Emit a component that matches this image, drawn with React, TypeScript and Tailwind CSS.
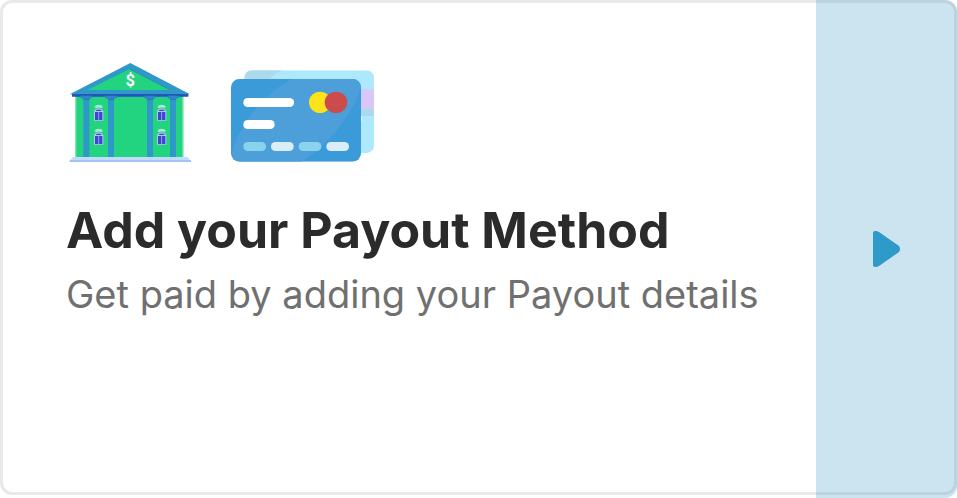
function BankWindow({ x, y }: { x: number; y: number }) {
  return (
    <g transform={`translate(${x} ${y})`}>
      <path d="M1 6 L6 1 L14 -1 L22 1 L27 6 L22 9 H6 Z" fill="#a6ecd0" />
      <path d="M10 6 H18 V11 H10 Z" fill="#63ddb0" />
      <path d="M0 19 L4 13 L8 11 H20 L24 13 L28 19 V47 H0 Z" fill="#b3c4f5" />
      <path d="M8 14 H20 L23 18 H5 Z" fill="#3c46d2" />
      <path d="M3 21 H25 V45 H3 Z" fill="#3c46d2" />
      <path d="M14 21 V45" stroke="#8fa2ee" strokeWidth="3" />
    </g>
  );
}

function BankPillar({ x }: { x: number }) {
  return (
    <g transform={`translate(${x} 0)`}>
      <path d="M-8 122 H26 V128 L21 131 H-3 L-8 128 Z" fill="#2c86c6" />
      <path d="M0 130 H18 V306 H0 Z" fill="#2e98c8" />
      <path d="M0 131 H18 V135 H0 Z" fill="#3070cc" />
    </g>
  );
}

function BankIcon() {
  return (
    <svg viewBox="27 21 372 303" className="h-[101px] w-[124px]" role="img" aria-label="Bank">
      <path d="M46 120 H370 V308 H46 Z" fill="#22d37f" />
      <path d="M46 126 H49 V306 H46 Z M367 126 H370 V306 H367 Z" fill="#8be9ba" />
      <path d="M211 24 L390 118 H29 Z" fill="#2e98c8" />
      <path d="M209 42 L331 105 H82 Z" fill="#22d37f" />
      <path d="M209 42 L331 105" stroke="#2c78c5" strokeWidth="2" />
      <path d="M36 117 H385 V121 H36 Z" fill="#17649c" />
      <path d="M36 120 H385 V125 H36 Z" fill="#3348d2" />
      <BankPillar x={70} />
      <BankPillar x={144} />
      <BankPillar x={261} />
      <BankPillar x={330} />
      <BankWindow x={102} y={150} />
      <BankWindow x={102} y={222} />
      <BankWindow x={291} y={150} />
      <BankWindow x={291} y={222} />
      <path d="M39 306 H382 L392 317 H29 Z" fill="#c3dcfd" />
      <path d="M29 315 H393 V321 H29 Z" fill="#a4c2f5" />
      <text
        x="211"
        y="94"
        textAnchor="middle"
        fontSize="50"
        fontWeight="700"
        fill="#fff"
        className="font-['Roboto',sans-serif]"
      >
        $
      </text>
    </svg>
  );
}

function CardsIcon() {
  return (
    <svg viewBox="24 21 435 282" className="h-[94px] w-[145px]" role="img" aria-label="Payment cards">
      <defs>
        <clipPath id="back-card">
          <rect x="67" y="25" width="389" height="248" rx="22" />
        </clipPath>
        <clipPath id="front-card">
          <rect x="27" y="51" width="390" height="248" rx="25" />
        </clipPath>
      </defs>
      <g clipPath="url(#back-card)">
        <path d="M67 25 H456 V273 H67 Z" fill="#aee8fb" />
        <path d="M67 25 H180 Q155 35 138 60 H67 Z" fill="#acdaea" />
        <path d="M400 82 H456 V141 H400 Z" fill="#d9c7fa" />
        <path d="M400 141 H456 V162 H400 Z" fill="#acdaea" />
        <path d="M412 162 H420 V176 L417 180 H412 Z" fill="#e0f7ff" />
      </g>
      <g clipPath="url(#front-card)">
        <path d="M27 51 H417 V299 H27 Z" fill="#3b9ad8" />
        <path
          d="M207 51 H417 V75 Q402 126 366 177 Q312 252 240 299 H52 Q27 296 31 264 Q80 126 207 51 Z"
          fill="#4c9fd9"
        />
      </g>
      <ellipse cx="294" cy="121" rx="33" ry="32" fill="#fde31a" />
      <ellipse cx="342" cy="121" rx="34" ry="32" fill="#cc4b4c" />
      <rect x="64" y="108" width="152" height="27" rx="13" fill="#fff" />
      <rect x="64" y="174" width="94" height="27" rx="13" fill="#fff" />
      <rect x="64" y="240" width="68" height="27" rx="13" fill="#8ad3ec" />
      <rect x="147" y="240" width="68" height="27" rx="13" fill="#d9eef7" />
      <rect x="230" y="240" width="68" height="27" rx="13" fill="#8ad3ec" />
      <rect x="313" y="240" width="68" height="27" rx="13" fill="#d9eef7" />
    </svg>
  );
}

export default function App() {
  return (
    <main className="relative flex min-h-screen bg-white font-['Inter','Liberation_Sans',sans-serif]">
      <div
        aria-hidden="true"
        className="pointer-events-none absolute inset-x-0 top-0 bottom-[3px] rounded-xl border-3 border-[#e9e9e9]"
      />
      <section className="relative min-w-0 flex-1 pt-[62px] pl-[66px]">
        <div className="flex items-end gap-[37px] pl-[3px]">
          <BankIcon />
          <CardsIcon />
        </div>
        <h1 className="mt-[35px] text-[50px] leading-16 font-bold whitespace-nowrap text-[#2b2b2b]">
          Add your Payout Method
        </h1>
        <p className="text-[38px] leading-16 whitespace-nowrap text-[#707070]">
          Get paid by adding your Payout details
        </p>
      </section>
      <button
        type="button"
        aria-label="Add payout method"
        className="relative flex w-[141px] shrink-0 items-center justify-center rounded-r-xl bg-[#328fc3]/25"
      >
        <svg viewBox="0 0 28 36" className="h-9 w-7" aria-hidden="true">
          <path
            d="M0 2 Q0 0 2 0 H3 Q4 0 6 1 L26 15 Q28 18 26 21 L6 35 Q4 36 3 36 H2 Q0 36 0 34 Z"
            fill="#2e9ac9"
          />
        </svg>
      </button>
    </main>
  );
}
